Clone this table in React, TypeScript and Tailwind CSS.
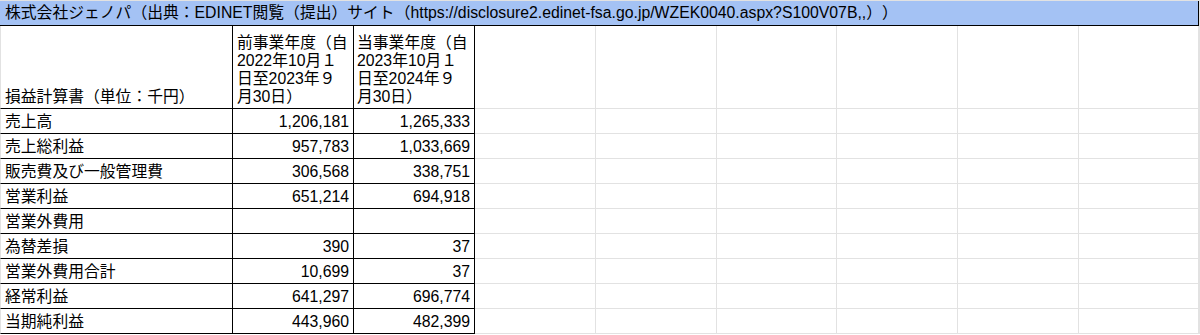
import React from 'react';

const FONT = { fontFamily: '"Liberation Sans", Arial, "Noto Sans CJK JP", sans-serif' };

const rows: [string, string, string][] = [
  ['売上高', '1,206,181', '1,265,333'],
  ['売上総利益', '957,783', '1,033,669'],
  ['販売費及び一般管理費', '306,568', '338,751'],
  ['営業利益', '651,214', '694,918'],
  ['営業外費用', '', ''],
  ['為替差損', '390', '37'],
  ['営業外費用合計', '10,699', '37'],
  ['経常利益', '641,297', '696,774'],
  ['当期純利益', '443,960', '482,399'],
];

// empty columns to the right of the table
const blanks = [0, 1, 2, 3, 4, 5];

const Blank: React.FC = () => <div className="border-r border-b border-[#e2e2e2]" />;

export default function App() {
  return (
    <div
      className="w-[1200px] h-[335px] overflow-hidden bg-white text-black text-[15.8px] [text-spacing-trim:space-all]"
      style={FONT}
    >
      <div className="border-t border-[#e2e2e2] grid grid-cols-[233px_121px_121px_121px_121px_120px_121px_121px_120px_1fr]">
        {/* Title */}
        <div className="col-span-9 h-[25px] bg-[#a4c2f4] border-r border-b border-black pl-[5px] flex items-center whitespace-nowrap leading-5">
          株式会社ジェノパ（出典：EDINET閲覧（提出）サイト（https://disclosure2.edinet-fsa.go.jp/WZEK0040.aspx?S100V07B,,））
        </div>
        <Blank />

        {/* Header */}
        <div className="h-[83px] border-l border-[#e2e2e2] border-r border-r-black border-b border-b-black pl-[4px] pb-[2px] flex items-end leading-[18px]">
          損益計算書（単位：千円）
        </div>
        <div className="border-r border-b border-black pl-[4px] pb-[2px] flex items-end leading-[18px]">
          <div>
            前事業年度（自<br />2022年10月１<br />日至2023年９<br />月30日）
          </div>
        </div>
        <div className="border-r border-b border-black pl-[3px] pb-[2px] flex items-end leading-[18px]">
          <div>
            当事業年度（自<br />2023年10月１<br />日至2024年９<br />月30日）
          </div>
        </div>
        {blanks.map((b) => (
          <Blank key={'h' + b} />
        ))}
        <Blank />

        {/* Data rows */}
        {rows.map(([label, prev, cur]) => (
          <React.Fragment key={label}>
            <div className="h-[25px] border-l border-[#e2e2e2] border-r border-r-black border-b border-b-black pl-[4px] flex items-end leading-5 pb-[1px] whitespace-nowrap">
              {label}
            </div>
            <div className="border-r border-b border-black pr-[4px] flex items-end justify-end leading-5 pb-[1px]">
              {prev}
            </div>
            <div className="border-r border-b border-black pr-[4px] flex items-end justify-end leading-5 pb-[1px]">
              {cur}
            </div>
            {blanks.map((b) => (
              <Blank key={label + b} />
            ))}
            <Blank />
          </React.Fragment>
        ))}
      </div>
    </div>
  );
}
